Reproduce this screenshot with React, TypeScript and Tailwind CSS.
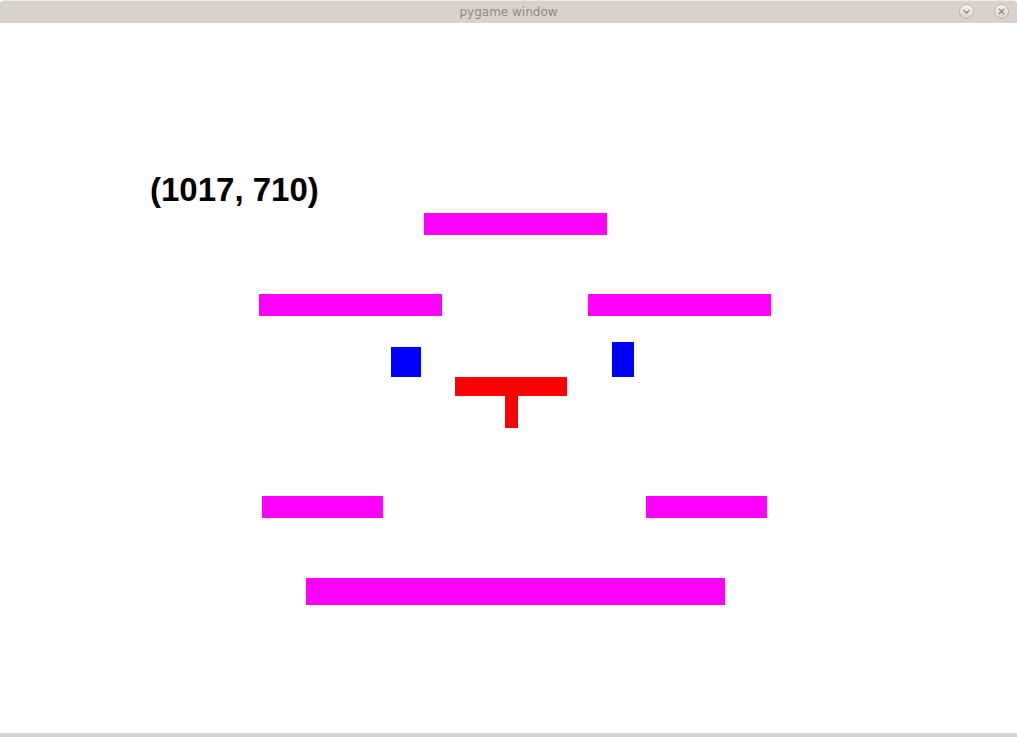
import React from "react";

// pygame window: title bar, 1017x710 drawing surface, thin bottom frame
const rects = [
  { x: 424, y: 190, w: 183, h: 22, c: "bg-[#ff00ff]" },
  { x: 259, y: 271, w: 183, h: 22, c: "bg-[#ff00ff]" },
  { x: 588, y: 271, w: 183, h: 22, c: "bg-[#ff00ff]" },
  { x: 391, y: 324, w: 30, h: 30, c: "bg-[#0000ff]" },
  { x: 612, y: 319, w: 22, h: 35, c: "bg-[#0000ff]" },
  { x: 455, y: 354, w: 112, h: 19, c: "bg-[#ff0000]" },
  { x: 505, y: 373, w: 13, h: 32, c: "bg-[#ff0000]" },
  { x: 262, y: 473, w: 121, h: 22, c: "bg-[#ff00ff]" },
  { x: 646, y: 473, w: 121, h: 22, c: "bg-[#ff00ff]" },
  { x: 306, y: 555, w: 419, h: 27, c: "bg-[#ff00ff]" },
];

function TitleButton({ kind }: { kind: "min" | "close" }) {
  return (
    <div className="w-[15px] h-[15px] rounded-full border border-[#b9b5b1] bg-gradient-to-b from-[#f4f2f0] to-[#d8d4d0] flex items-center justify-center">
      <svg width="9" height="9" viewBox="0 0 9 9" fill="none" stroke="#8c8884" strokeWidth="1.3" strokeLinecap="round">
        {kind === "min" ? (
          <path d="M2 3.5 L4.5 6 L7 3.5" />
        ) : (
          <path d="M2.2 2.2 L6.8 6.8 M6.8 2.2 L2.2 6.8" />
        )}
      </svg>
    </div>
  );
}

export default function App() {
  return (
    <div className="w-[1017px] h-[737px] flex flex-col bg-white overflow-hidden">
      <div className="h-[23px] shrink-0 relative flex items-center justify-center bg-[#d6d2ce] rounded-t-[4px] border-t border-[#ebe9e6]">
        <span className="text-[12px] text-[#8d8a87] font-['DejaVu_Sans',sans-serif] leading-none">pygame window</span>
        <div className="absolute right-[8px] top-[3px] flex gap-[20px]">
          <TitleButton kind="min" />
          <TitleButton kind="close" />
        </div>
      </div>
      <div className="relative h-[710px] shrink-0 bg-white">
        <div className="absolute left-[150px] top-[147px] text-[33px] leading-[40px] font-bold text-black font-['Liberation_Sans',Arial,sans-serif]">
          (1017, 710)
        </div>
        {rects.map((r, i) => (
          <div
            key={i}
            className={`absolute ${r.c}`}
            style={{ left: r.x, top: r.y, width: r.w, height: r.h }}
          />
        ))}
      </div>
      <div className="h-[4px] shrink-0 bg-[#d6d2ce]" />
    </div>
  );
}
